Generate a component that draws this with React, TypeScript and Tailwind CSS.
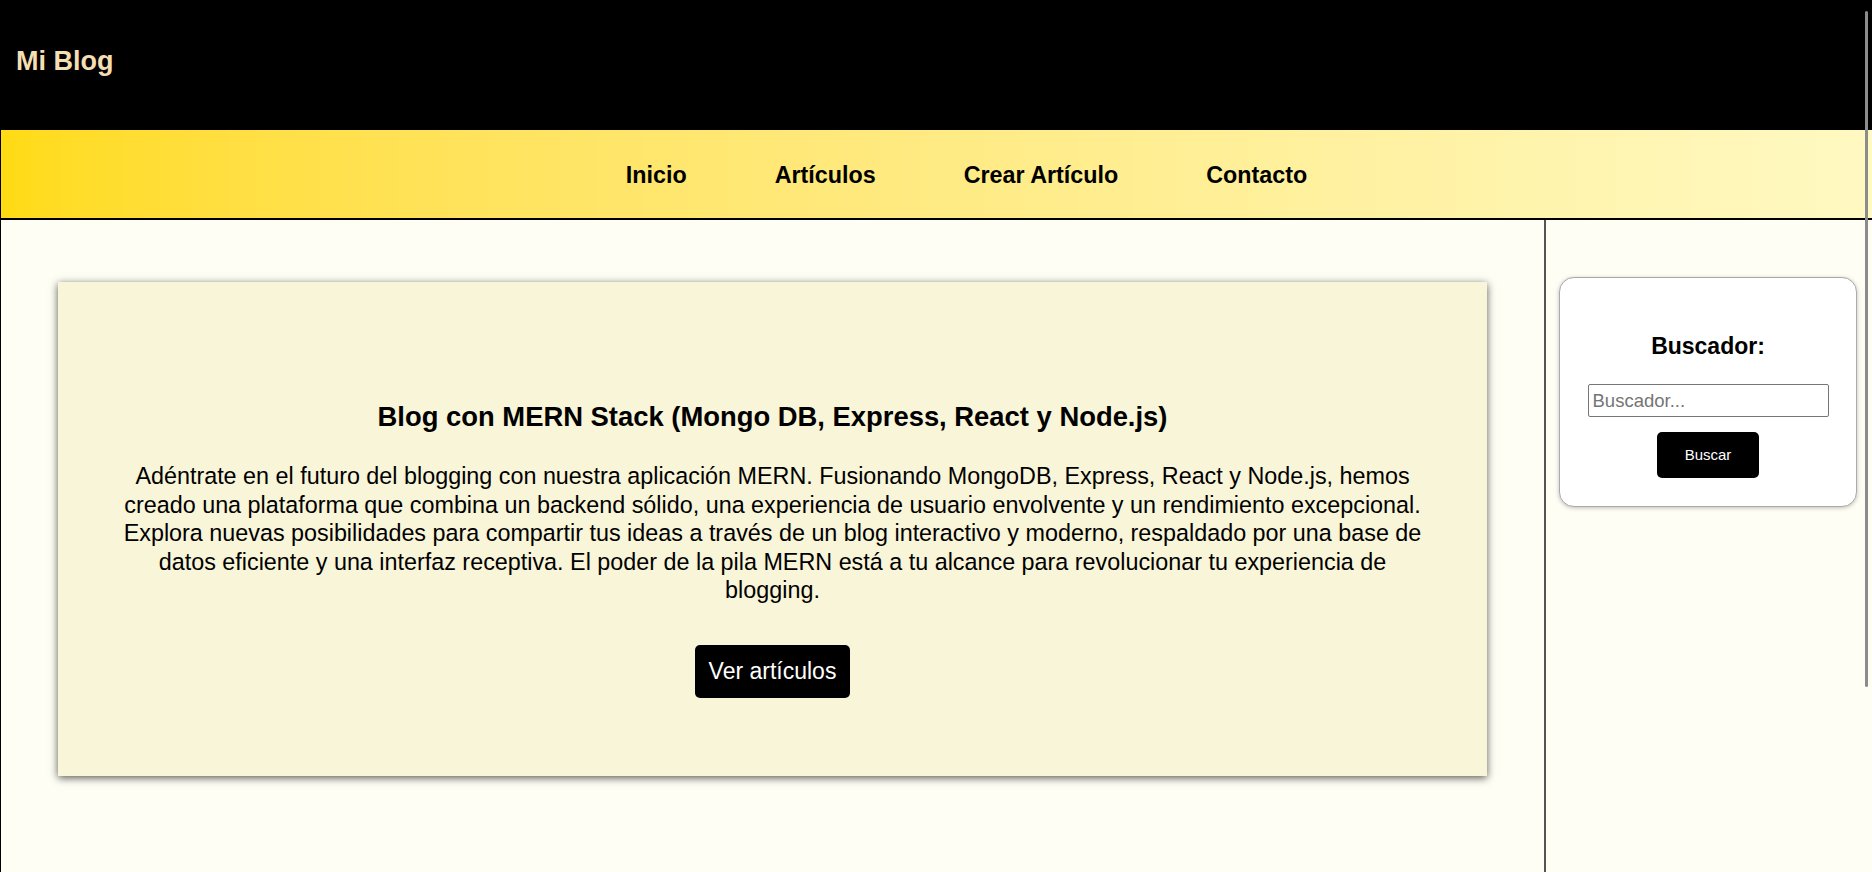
import React from "react";

export default function App() {
  return (
    <div
      className="relative min-h-screen bg-[#fefef5] text-black"
      style={{ fontFamily: '"Liberation Sans", Arial, sans-serif' }}
    >
      <header className="h-[129px] bg-black pl-[16px] pt-[46px]">
        <h1 className="text-[27px] font-bold leading-[31px] text-[#f5deb3]">Mi Blog</h1>
      </header>

      <nav className="flex h-[91px] items-center justify-center border-l border-t border-b-2 border-black bg-gradient-to-r from-[#ffdb12] to-[#fff9c2] pl-[60px] pt-[3px]">
        <ul className="flex">
          {["Inicio", "Artículos", "Crear Artículo", "Contacto"].map((t) => (
            <li key={t} className="px-[44px]">
              <a href="#" className="text-[23.3px] font-bold leading-[26px] text-black">
                {t}
              </a>
            </li>
          ))}
        </ul>
      </nav>

      <div className="flex min-h-[652px] border-l border-black">
        <main className="w-[1543px] shrink-0 px-[57px] pt-[62px] pb-[40px]">
          <section className="flex h-[494px] flex-col items-center bg-[#f9f5d8] px-[55px] pt-[119px] shadow-[0_2px_8px_rgba(0,0,0,0.65)]">
            <h2 className="text-center text-[27.4px] font-bold leading-[31px]">
              Blog con MERN Stack (Mongo DB, Express, React y Node.js)
            </h2>
            <p className="mt-[30px] text-center text-[23.35px] leading-[28.5px]">
              Adéntrate en el futuro del blogging con nuestra aplicación MERN. Fusionando MongoDB, Express, React y Node.js, hemos creado una plataforma que combina un backend sólido, una experiencia de usuario envolvente y un rendimiento excepcional. Explora nuevas posibilidades para compartir tus ideas a través de un blog interactivo y moderno, respaldado por una base de datos eficiente y una interfaz receptiva. El poder de la pila MERN está a tu alcance para revolucionar tu experiencia de blogging.
            </p>
            <button className="mt-[40px] h-[53px] rounded-[5px] bg-black px-[14px] text-[23px] leading-[26px] text-white">
              Ver artículos
            </button>
          </section>
        </main>

        <aside className="flex-1 border-l-2 border-[#555] pl-[13px] pr-[15px] pt-[57px]">
          <div className="flex flex-col items-center rounded-[15px] border border-[#aaa] bg-white pt-[55px] pb-[28px] shadow-[0_1px_4px_rgba(0,0,0,0.25)]">
            <h3 className="text-[23px] font-bold leading-[26px]">Buscador:</h3>
            <input
              type="text"
              placeholder="Buscador..."
              className="mt-[25px] h-[33px] w-[241px] rounded-[2px] border border-[#767676] bg-white px-[4px] text-[18.5px] text-black outline-none placeholder:text-[#757575]"
            />
            <button className="mt-[15px] h-[46px] w-[102px] rounded-[5px] bg-black text-[15px] text-white">
              Buscar
            </button>
          </div>
        </aside>
      </div>

      <div className="absolute right-[4px] top-[11px] h-[676px] w-[3px] rounded-full bg-[#8c8c8c]" />
    </div>
  );
}
